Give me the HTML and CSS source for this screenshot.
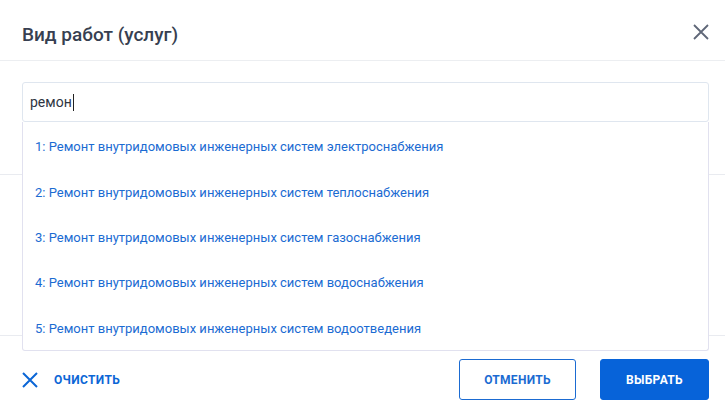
FILE: index.html
```html
<!DOCTYPE html>
<html lang="ru">

<head>
    <meta charset="UTF-8" />
    <meta name="viewport" content="width=device-width, initial-scale=1.0" />
    <title>Вид работ (услуг)</title>
    <link rel="stylesheet" href="styles.css">
</head>

<body>
    <div class="modal">
        <div class="modal-header">
            <h2 class="modal-title">Вид работ (услуг)</h2>
            <button class="close-btn" aria-label="Закрыть">
                <svg width="16" height="16" viewBox="0 0 16 16">
                    <path d="M1 1L15 15M15 1L1 15" stroke="#5f6778" stroke-width="1.8" fill="none" />
                </svg>
            </button>
        </div>

        <div class="modal-body">
            <div class="search">
                <div class="search-input">ремон<span class="caret"></span></div>
                <ul class="suggest-list">
                    <li>1: Ремонт внутридомовых инженерных систем электроснабжения</li>
                    <li>2: Ремонт внутридомовых инженерных систем теплоснабжения</li>
                    <li>3: Ремонт внутридомовых инженерных систем газоснабжения</li>
                    <li>4: Ремонт внутридомовых инженерных систем водоснабжения</li>
                    <li>5: Ремонт внутридомовых инженерных систем водоотведения</li>
                </ul>
            </div>
            <div class="results"></div>
        </div>

        <div class="modal-footer">
            <button class="clear-btn">
                <svg width="16" height="16" viewBox="0 0 16 16">
                    <path d="M1 1L15 15M15 1L1 15" stroke="#0b66d6" stroke-width="2" fill="none" />
                </svg>
                <span>Очистить</span>
            </button>
            <div class="actions">
                <button class="btn btn-outline">Отменить</button>
                <button class="btn btn-primary">Выбрать</button>
            </div>
        </div>
    </div>
</body>

</html>
```

FILE: styles.css
```css
* {
    box-sizing: border-box;
    margin: 0;
    padding: 0;
}

body {
    font-family: Roboto, "Noto Sans", sans-serif;
    background-color: #fff;
    color: #333;
}

.modal {
    width: 725px;
    height: 412px;
    display: flex;
    flex-direction: column;
    background: #fff;
}

.modal-header {
    height: 61px;
    display: flex;
    align-items: center;
    justify-content: space-between;
    padding: 0 16px 0 22px;
    border-bottom: 1px solid #eceef1;
}

.modal-title {
    font-size: 19px;
    font-weight: 500;
    color: #373f51;
    margin-top: 8px;
}

.close-btn {
    border: none;
    background: none;
    width: 17px;
    height: 17px;
    margin-top: 4px;
    cursor: pointer;
}

.modal-body {
    position: relative;
    padding: 21px 16px 0 22px;
}

.search {
    position: relative;
}

.search-input {
    height: 40px;
    border: 1px solid #dfe6ef;
    border-radius: 3px;
    padding: 0 7px;
    display: flex;
    align-items: center;
    font-size: 14px;
    color: #2f3542;
}

.caret {
    display: inline-block;
    width: 1px;
    height: 17px;
    background: #222;
    margin-left: 1px;
}

.suggest-list {
    position: absolute;
    top: 40px;
    left: 0;
    right: 0;
    list-style: none;
    background: #fff;
    border: 1px solid #e1e1ef;
    border-top: none;
    border-radius: 0 0 3px 3px;
    z-index: 2;
    padding-top: 1px;
}

.suggest-list li {
    height: 45.4px;
    display: flex;
    align-items: center;
    padding: 2px 12px 0;
    font-size: 13px;
    color: #1b6bd2;
    cursor: pointer;
}

.results {
    margin: 52px -16px 0 -22px;
    height: 162px;
    border-top: 1px solid #e9ebf0;
    border-bottom: 1px solid #e9ebf0;
}

.modal-footer {
    display: flex;
    align-items: center;
    justify-content: space-between;
    padding: 23px 16px 12px 22px;
}

.clear-btn {
    display: flex;
    align-items: center;
    gap: 16px;
    border: none;
    background: none;
    font-family: inherit;
    font-size: 12px;
    font-weight: 700;
    letter-spacing: 0.35px;
    text-transform: uppercase;
    color: #0b66d6;
    cursor: pointer;
}

.actions {
    display: flex;
    gap: 24px;
}

.btn {
    height: 41px;
    border-radius: 3px;
    font-family: inherit;
    font-size: 12px;
    font-weight: 700;
    letter-spacing: 0.3px;
    text-transform: uppercase;
    cursor: pointer;
}

.btn-outline {
    width: 117px;
    background: #fff;
    border: 1px solid #1b6bd2;
    color: #1b6bd2;
}

.btn-primary {
    width: 109px;
    background: #0763d9;
    border: 1px solid #0763d9;
    color: #fff;
}
```
